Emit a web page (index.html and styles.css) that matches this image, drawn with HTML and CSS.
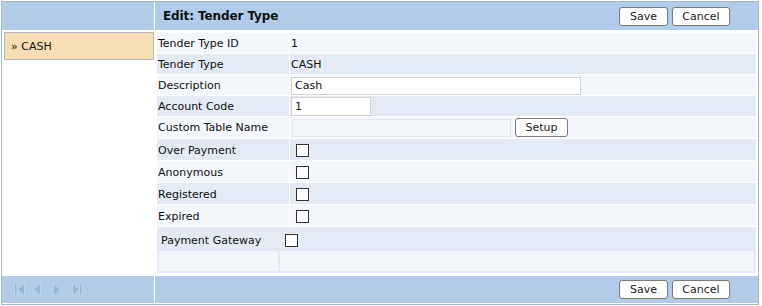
FILE: index.html
```html
<!DOCTYPE html>
<html>
<head>
<meta charset="utf-8">
<title>Edit: Tender Type</title>
<link rel="stylesheet" href="styles.css">
</head>
<body>
<div class="frame">
  <div class="hd hd-left"></div>
  <div class="hd hd-right">
    <span class="title">Edit: Tender Type</span>
    <div class="btns"><button class="btn btn-save">Save</button><button class="btn btn-cancel">Cancel</button></div>
  </div>
  <div class="side"><div class="item">» CASH</div></div>
  <div class="main">
    <table class="form">
      <tr class="r20 lt"><td class="lbl">Tender Type ID</td><td class="val">1</td></tr>
      <tr class="r20 dk"><td class="lbl">Tender Type</td><td class="val">CASH</td></tr>
      <tr class="r20 lt"><td class="lbl">Description</td><td class="val"><input class="inp inp-desc" type="text" value="Cash"></td></tr>
      <tr class="r20 dk"><td class="lbl">Account Code</td><td class="val"><input class="inp inp-code" type="text" value="1"></td></tr>
      <tr class="r21 lt"><td class="lbl">Custom Table Name</td><td class="val"><div class="ctn"><input class="inp inp-tbl" type="text" disabled><button class="btn btn-setup">Setup</button></div></td></tr>
      <tr class="r21 cb dk"><td class="lbl">Over Payment</td><td class="val"><input class="chk" type="checkbox"></td></tr>
      <tr class="r21 cb lt"><td class="lbl">Anonymous</td><td class="val"><input class="chk" type="checkbox"></td></tr>
      <tr class="r21 cb dk"><td class="lbl">Registered</td><td class="val"><input class="chk" type="checkbox"></td></tr>
      <tr class="r21 cb lt"><td class="lbl">Expired</td><td class="val"><input class="chk" type="checkbox"></td></tr>
      <tr class="dk"><td class="nest" colspan="2">
        <table class="inner">
          <tr class="ir1"><td class="ilbl">Payment Gateway</td><td class="ival"><input class="chk chk-in" type="checkbox"></td></tr>
          <tr class="ir2"><td class="ilbl"></td><td class="ival"></td></tr>
        </table>
      </td></tr>
    </table>
  </div>
  <div class="ft ft-left">
    <svg class="pager" width="70" height="13" viewBox="0 0 70 13">
      <g fill="#96b6df" stroke="#bcd2ee" stroke-width="1">
        <rect x="0.5" y="0.5" width="2.5" height="12"/>
        <polygon points="10.5,0.5 10.5,12.5 3.5,6.5"/>
        <polygon points="26.5,0.5 26.5,12.5 19.5,6.5"/>
        <polygon points="39.5,0.5 39.5,12.5 46.5,6.5"/>
        <polygon points="58.5,0.5 58.5,12.5 65.5,6.5"/>
        <rect x="65.5" y="0.5" width="2.5" height="12"/>
      </g>
    </svg>
  </div>
  <div class="ft ft-right">
    <div class="btns"><button class="btn btn-save">Save</button><button class="btn btn-cancel">Cancel</button></div>
  </div>
</div>
</body>
</html>
```

FILE: styles.css
```css
html, body {
  margin: 0;
  padding: 0;
  background: #ffffff;
}
body {
  font-family: "DejaVu Sans", Verdana, sans-serif;
  font-size: 11px;
  color: #111111;
}
.frame {
  margin: 1px;
  width: 756px;
  border: 1px solid #a4b7cf;
  padding-bottom: 1px;
  display: grid;
  grid-template-columns: 152px 603px;
  grid-template-rows: 28px 246px 27px;
  column-gap: 1px;
  background: #ffffff;
}
.hd, .ft {
  background: #b2cbe8;
  display: flex;
  align-items: center;
}
.hd-right {
  justify-content: space-between;
  padding: 0 28px 0 8px;
}
.title {
  font-weight: bold;
  font-size: 12px;
  letter-spacing: -0.1px;
  color: #111111;
}
.btns {
  display: flex;
  gap: 4px;
}
.btn {
  font-family: "DejaVu Sans", Verdana, sans-serif;
  font-size: 11px;
  color: #222222;
  background: #ffffff;
  border: 1px solid #7a7a7a;
  border-radius: 3px;
  height: 19px;
  padding: 0;
  margin: 0;
}
.btn-save { width: 49px; }
.btn-cancel { width: 58px; }
.side {
  padding: 2px 0 0 2px;
}
.item {
  background: #f5deb3;
  border: 1px solid #b9b9b9;
  height: 28px;
  box-sizing: border-box;
  display: flex;
  align-items: center;
  padding-left: 6px;
  font-size: 11px;
}
.main {
  padding: 2px 1px 1px 1px;
}
.form {
  border-collapse: separate;
  border-spacing: 1px;
  width: 100%;
}
.form td {
  padding: 0 1px;
  vertical-align: middle;
}
.r20 td { height: 20px; }
.r21 td { height: 21px; }
.r21.cb td { height: 20px; padding-top: 1px; }
.lt td { background: #f3f6fa; }
.dk td { background: #e3eaf3; }
.lbl { width: 130px; }
.val { padding-left: 1px; }
.inp {
  font-family: "DejaVu Sans", Verdana, sans-serif;
  font-size: 11px;
  color: #111111;
  border: 1px solid #d2d2d2;
  background: #ffffff;
  box-sizing: border-box;
  margin: 0;
  padding: 0 3px;
  display: block;
}
.inp-desc { width: 290px; height: 18px; margin-top: 1px; }
.inp-code { width: 80px; height: 19px; }
.ctn {
  display: flex;
  align-items: center;
  gap: 4px;
  padding-left: 1px;
}
.inp-tbl {
  width: 219px;
  height: 18px;
  background: #f3f6fa;
  border-color: #e2e6ec;
}
.btn-setup { width: 53px; height: 19px; }
.chk {
  appearance: none;
  -webkit-appearance: none;
  width: 13px;
  height: 13px;
  border: 1px solid #333333;
  background: #ffffff;
  margin: 0 0 0 5px;
  display: block;
}
.form td.nest {
  padding: 0;
}
.inner {
  border-collapse: separate;
  border-spacing: 2px;
  width: 100%;
}
.inner td {
  height: 20px;
  padding: 0;
  vertical-align: middle;
  background: transparent;
}
.ilbl { width: 119px; }
.ir1 .ilbl { padding-left: 2px; width: 117px; }
.ir1 td { padding-top: 2px; height: 18px; }
.ir2 td { background: #f3f6fa; }
.chk-in { margin-left: 5px; margin-top: 0; }
.ft-left {
  padding-left: 12px;
}
.pager { display: block; }
.ft-right {
  justify-content: flex-end;
  padding-right: 28px;
}
```
